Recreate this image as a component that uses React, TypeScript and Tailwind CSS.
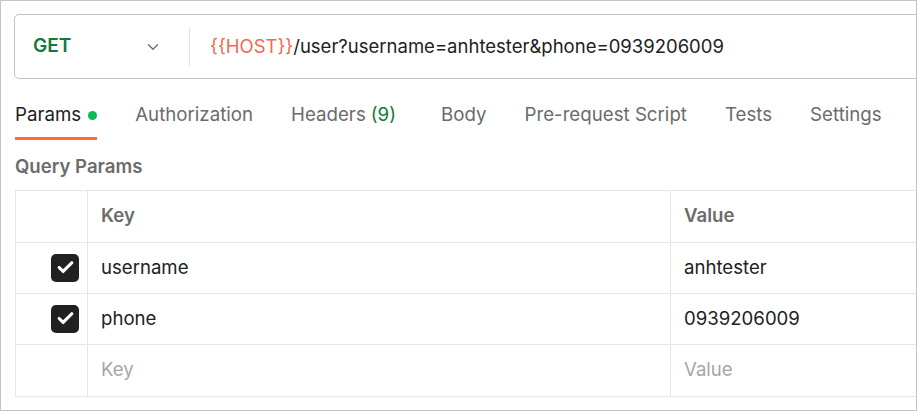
import { Check, ChevronDown } from "lucide-react";

const TABS = [
  { label: "Authorization" },
  { label: "Headers", count: "(9)" },
  { label: "Body" },
  { label: "Pre-request Script" },
  { label: "Tests" },
  { label: "Settings" },
];

const ROWS = [
  { key: "username", value: "anhtester", checked: true },
  { key: "phone", value: "0939206009", checked: true },
  { key: "", value: "", checked: false },
];

const Checkbox = () => (
  <div className="w-[28px] h-[28px] rounded-[5px] bg-[#212121] flex items-center justify-center">
    <Check className="w-[19px] h-[19px] text-white" strokeWidth={4} />
  </div>
);

const App = () => {
  return (
    <div
      className="w-[917px] h-[411px] border border-[#c4c4c4] bg-white overflow-hidden"
      style={{ fontFamily: "Inter, 'Noto Sans', sans-serif" }}>
      {/* URL bar */}
      <div className="mt-[13px] ml-[13px] w-[920px] h-[65px] border border-[#c2c2c2] rounded-[5px] flex items-center">
        <div className="w-[174px] flex items-center pl-[18px] pr-[27px] justify-between">
          <span className="text-[19px] font-semibold text-[#0f7a3a]">GET</span>
          <ChevronDown className="w-[18px] h-[18px] text-[#6b6b6b]" strokeWidth={1.75} />
        </div>
        <div className="w-px h-[38px] bg-[#e3e3e3]" />
        <div className="pl-[20px] text-[18.5px] text-[#212121]">
          <span className="text-[#f26a4b]">{"{{HOST}}"}</span>
          /user?username=anhtester&amp;phone=0939206009
        </div>
      </div>

      {/* Tabs */}
      <div className="mt-[20px] ml-[14px] flex items-start h-[42px] text-[18.7px] text-[#6b6b6b]">
        <div className="flex flex-col">
          <div className="flex items-center h-[33px]">
            <span className="text-[#212121]">Params</span>
            <span className="ml-[7px] w-[9px] h-[9px] rounded-full bg-[#0cbb52]" />
          </div>
          <div className="h-[3px] bg-[#ff6c37] mt-[5px]" />
        </div>
        {TABS.map((tab) => (
          <div
            key={tab.label}
            className={`flex items-center h-[33px] ${tab.label === "Body" ? "ml-[45px]" : "ml-[38px]"}`}>
            {tab.label}
            {tab.count && <span className="ml-[5px] text-[#0f7a3a]">{tab.count}</span>}
          </div>
        ))}
      </div>

      {/* Query Params */}
      <div className="ml-[14px] mt-[12px] text-[18.6px] font-semibold text-[#6b6b6b]">Query Params</div>

      <div className="ml-[14px] mt-[9px] w-[910px] border border-[#e6e6e6] text-[18.6px]">
        <div className="grid grid-cols-[71px_583px_1fr] h-[52px] border-b border-[#e6e6e6] font-semibold text-[#6b6b6b]">
          <div />
          <div className="border-l border-[#e6e6e6] pl-[13px] flex items-center">Key</div>
          <div className="border-l border-[#e6e6e6] pl-[13px] flex items-center">Value</div>
        </div>
        {ROWS.map((row, i) => (
          <div
            key={i}
            className={`grid grid-cols-[71px_583px_1fr] h-[51px] ${i < ROWS.length - 1 ? "border-b border-[#e6e6e6]" : ""}`}>
            <div className="flex items-center justify-end pr-[8px]">{row.checked && <Checkbox />}</div>
            <div className="border-l border-[#e6e6e6] pl-[13px] flex items-center">
              {row.key ? (
                <span className="text-[#212121]">{row.key}</span>
              ) : (
                <span className="text-[#a6a6a6]">Key</span>
              )}
            </div>
            <div className="border-l border-[#e6e6e6] pl-[13px] flex items-center">
              {row.value ? (
                <span className="text-[#212121]">{row.value}</span>
              ) : (
                <span className="text-[#a6a6a6]">Value</span>
              )}
            </div>
          </div>
        ))}
      </div>
    </div>
  );
};

export default App;
